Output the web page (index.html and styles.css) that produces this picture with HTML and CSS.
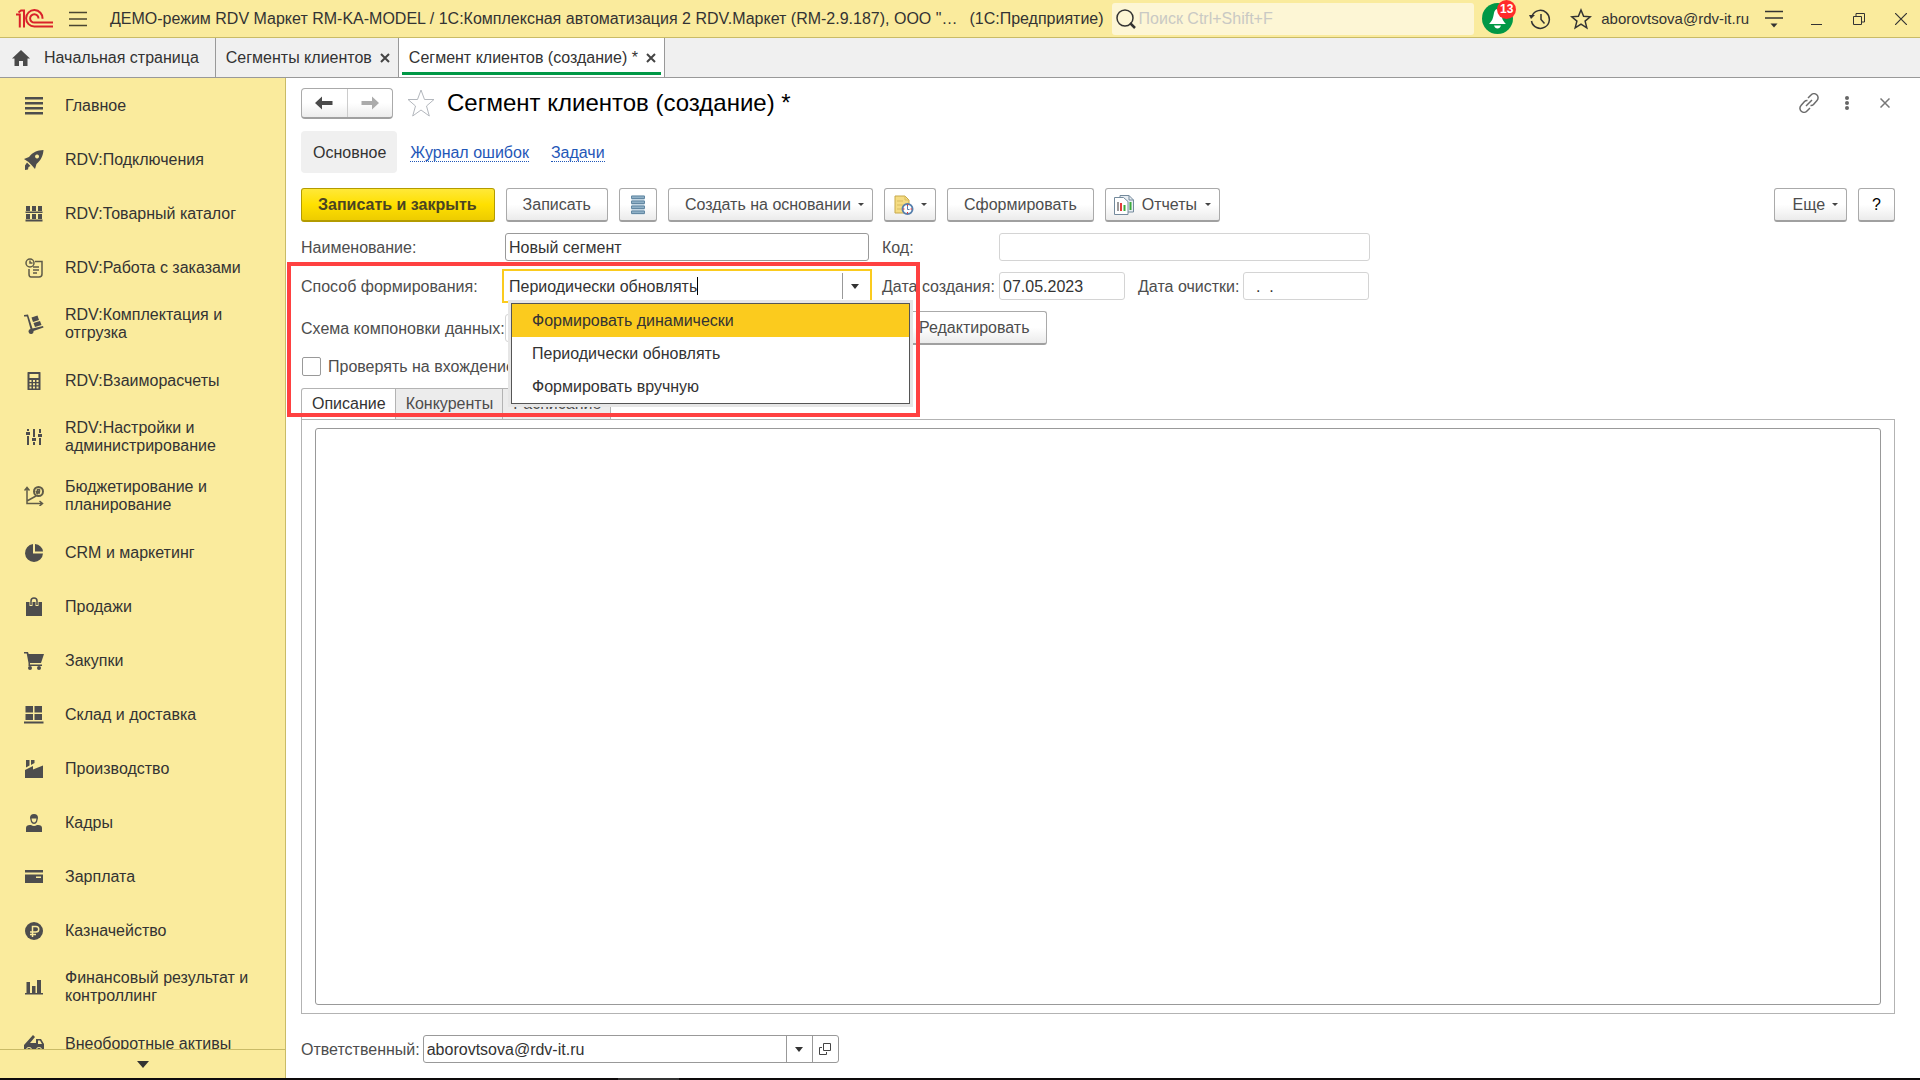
FILE: index.html
```
<!DOCTYPE html>
<html lang="ru">
<head>
    <meta charset="UTF-8">
    <meta name="viewport" content="width=device-width, initial-scale=1.0">
    <title>Сегмент клиентов (создание)</title>
    <link rel="stylesheet" href="styles.css">
</head>
<body>

    <!-- Title bar -->
    <header class="topbar">
        <svg class="logo" width="38" height="20" viewBox="0 0 38 20" fill="none" stroke="#d9222a" stroke-width="2">
            <path d="M0 5.500h3.800V18.500M2.500 3.500L5 1.500h3V18.500"/>
            <path d="M26.500 9.800A8.200 8.200 0 1 0 18.500 17.500H37"/>
            <path d="M22.500 9.500A4.200 4.200 0 1 0 18.500 13.600H37"/>
        </svg>
        <button class="icon-btn menu-btn" aria-label="Меню">
            <svg width="18" height="16" viewBox="0 0 18 16" stroke="#4a4631" stroke-width="1.500"><path d="M0 1.500h18M0 8h18M0 14.500h18"/></svg>
        </button>
        <div class="app-title">ДЕМО-режим RDV Маркет RM-KA-MODEL / 1С:Комплексная автоматизация 2 RDV.Маркет (RM-2.9.187), ООО "…</div>
        <div class="app-name">(1С:Предприятие)</div>
        <label class="search">
            <svg width="20" height="20" viewBox="0 0 20 20" fill="none" stroke="#333"><circle cx="9" cy="9" r="8" stroke-width="1.500"/><path d="M14 14l5 5" stroke-width="2.500"/></svg>
            <input type="text" placeholder="Поиск Ctrl+Shift+F" aria-label="Поиск">
        </label>
        <button class="icon-btn bell" aria-label="Оповещения">
            <svg width="31" height="31" viewBox="0 0 31 31"><circle cx="15.500" cy="15.500" r="15.500" fill="#009846"/><path d="M15.500 6c2 0 3 2 3.500 4 1 6 2 8 5 11H7c3-3 4-5 5-11 .5-2 1.500-4 3.500-4zM12 22.500h7q-1 3-3.500 3t-3.500-3z" fill="#fff"/></svg>
            <span class="badge">13</span>
        </button>
        <div class="top-actions">
            <button class="icon-btn" aria-label="История">
                <svg width="22" height="22" viewBox="0 0 22 22" fill="none" stroke="#333" stroke-width="1.500"><path d="M3 8a9 9 0 1 1-.5 5M12 6v5.500l3.500 4"/><path d="M0 7h6l-4 4z" fill="#333" stroke="none"/></svg>
            </button>
            <button class="icon-btn" aria-label="Избранное">
                <svg width="22" height="22" viewBox="0 0 22 22" fill="none" stroke="#333" stroke-width="1.500"><path d="M11 2l2.600 6.300 6.700.5-5.200 4.300 1.700 6.700-5.800-3.700-5.800 3.700 1.700-6.700L1.700 8.800l6.700-.5z"/></svg>
            </button>
        </div>
        <a class="user" href="#">aborovtsova@rdv-it.ru</a>
        <button class="icon-btn service" aria-label="Сервис">
            <svg width="18" height="18" viewBox="0 0 18 18" stroke="#333" stroke-width="1.500"><path d="M0 1.500h18M0 8h18"/><path d="M5.500 13.500h7l-3.500 4z" fill="#333" stroke="none"/></svg>
        </button>
        <div class="window-btns">
            <button class="icon-btn" aria-label="Свернуть">
                <svg width="12" height="12" viewBox="0 0 12 12" stroke="#333"><path d="M0 11.500h11"/></svg>
            </button>
            <button class="icon-btn" aria-label="Развернуть">
                <svg width="12" height="12" viewBox="0 0 12 12" fill="none" stroke="#333"><path d="M.5 3.500h8v8h-8zM3 3V.5h8.500V9H9"/></svg>
            </button>
            <button class="icon-btn" aria-label="Закрыть">
                <svg width="12" height="12" viewBox="0 0 12 12" stroke="#333" stroke-width="1.200"><path d="M0 0l12 12M12 0L0 12"/></svg>
            </button>
        </div>
    </header>

    <!-- Open windows -->
    <nav class="window-tabs">
        <a class="window-tab home" href="#">
            <svg width="18" height="16" viewBox="0 0 18 16" fill="#4a4a4a"><path d="M9 0l9 8.500h-2.500V16h-4.500v-5H7v5H2.500V8.500H0z"/></svg>
            Начальная страница
        </a>
        <div class="window-tab">
            <a href="#">Сегменты клиентов</a>
            <button class="icon-btn" aria-label="Закрыть вкладку">
                <svg width="10" height="10" viewBox="0 0 10 10" stroke="#444" stroke-width="2"><path d="M1 1l8 8M9 1L1 9"/></svg>
            </button>
        </div>
        <div class="window-tab active">
            <a href="#">Сегмент клиентов (создание) *</a>
            <button class="icon-btn" aria-label="Закрыть вкладку">
                <svg width="10" height="10" viewBox="0 0 10 10" stroke="#444" stroke-width="2"><path d="M1 1l8 8M9 1L1 9"/></svg>
            </button>
        </div>
    </nav>

    <div class="workspace">

        <!-- Sections -->
        <aside class="sidebar">
            <nav class="sections">
                <a href="#"><svg viewBox="0 0 20 20"><path d="M1 1h18v2.500H1zM1 6h18v2.500H1zM1 11h18v2.500H1zM1 16h18v2.500H1z"/></svg><span>Главное</span></a>
                <a href="#"><svg viewBox="0 0 20 20"><path fill-rule="evenodd" d="M19.500 0c-.5 6-2.500 10-7 14l-1.500 5-3.500-4-3-3L0 9l5-2C9 2 13 .5 19.500 0zM13 4.500a2 2 0 1 0 .1 0zM3 12.500l3.500 3.500-2 1-.5 2.500-3 .5v-4.500z"/></svg><span>RDV:Подключения</span></a>
                <a href="#"><svg viewBox="0 0 20 20"><path d="M2 2h4v5H2zM8 2h4v5H8zM14 2h4v5h-4zM2 10h4v5H2zM8 10h4v5H8zM14 10h4v5h-4zM1.500 7.500h17V9h-17zM1.500 15.500h17v2h-17z"/></svg><span>RDV:Товарный каталог</span></a>
                <a href="#"><svg viewBox="0 0 20 20" class="line"><circle cx="6" cy="5" r="4"/><path d="M6 2.500V5h2.500M11 3.500h7V16q0 3-3 3H7q-2 0-2-3v-5M9 9h6M9 12h6M9 15h4"/></svg><span>RDV:Работа с заказами</span></a>
                <a href="#"><svg viewBox="0 0 20 20"><path d="M0 1l4-.5 4.500 14L19 12l.5 1.500-10 3.500a2.500 2.500 0 1 1-3-2L3 2.500H0zM7.500 3.500l6-2 1.500 4.500-6 2zM9.500 9l6.500-2 1.500 4-6.500 2z"/></svg><span>RDV:Комплектация и отгрузка</span></a>
                <a href="#"><svg viewBox="0 0 20 20"><path fill-rule="evenodd" d="M4 1h12q.5 0 .5.500v17q0 .5-.5.500H4q-.5 0-.5-.5v-17Q3.500 1 4 1zM5.500 3v4h9V3zM5.500 9v2h2V9zM9 9v2h2V9zM12.500 9v2h2V9zM5.500 12.200v2h2v-2zM9 12.200v2h2v-2zM12.500 12.200v2h2v-2zM5.500 15.500v2h2v-2zM9 15.500v2h2v-2zM12.500 15.500v2h2v-2z"/></svg><span>RDV:Взаиморасчеты</span></a>
                <a href="#"><svg viewBox="0 0 20 20"><path d="M3 2h2v2H3zM2 5h4v3H2zM3 9h2v9H3zM9 2h2v8H9zM8 11h4v3H8zM9 15h2v3H9zM15 2h2v4h-2zM14 7h4v3h-4zM15 11h2v7h-2z"/></svg><span>RDV:Настройки и администрирование</span></a>
                <a href="#"><svg viewBox="0 0 20 20" class="line"><path d="M3 2v15.500h15M.5 4.500L3 1.500l2.500 3M15.500 15l3 2.500-3 2.500M3 15l9-5"/><circle cx="14.500" cy="5.500" r="4.500" stroke-width="2"/><path d="M13.500 8.500V3.500h2v2h-4M12 7h4"/></svg><span>Бюджетирование и планирование</span></a>
                <a href="#"><svg viewBox="0 0 20 20"><path d="M9 1v9.500h10A9 9 0 1 1 9 1z"/><path d="M11 1q7 1 8 7.500h-8z"/></svg><span>CRM и маркетинг</span></a>
                <a href="#"><svg viewBox="0 0 20 20"><path d="M2 5h16v14H2z"/><path d="M7 9V4a3 3 0 0 1 6 0v5" fill="none" stroke="#faeb9d" stroke-width="3"/><path d="M7 8V4a3 3 0 0 1 6 0v4" fill="none" stroke="#4d4d4d" stroke-width="1.500"/></svg><span>Продажи</span></a>
                <a href="#"><svg viewBox="0 0 20 20"><path d="M0 1h4l.7 2H20l-3 9H6v1.500h12V15H4.500v-3L2.700 2.500H0z"/><circle cx="6" cy="17" r="2"/><circle cx="15" cy="17" r="2"/></svg><span>Закупки</span></a>
                <a href="#"><svg viewBox="0 0 20 20"><path d="M1.500 1H9v6.500H1.500zM10.500 1H18v6.500h-7.500zM1.500 9H9v6H1.500zM10.500 9H18v6h-7.500zM0 16.500h19.500v2H0z"/></svg><span>Склад и доставка</span></a>
                <a href="#"><svg viewBox="0 0 20 20"><path d="M1 11l8-4v3.500l10-4V19H1zM2 1h3.500v5.500L2 8.500zM7 1h3.500v3L7 6z"/></svg><span>Производство</span></a>
                <a href="#"><svg viewBox="0 0 20 20"><path d="M6 5q0-4 4-4t4 4l-1 4q-1 2-3 2T7 9zM2 19v-4q0-3 4-3h1q3 2 6 0h1q4 0 4 3v4z"/><path d="M7.500 5.500h5L12 8q-2 3-4 0z" fill="#faeb9d"/></svg><span>Кадры</span></a>
                <a href="#"><svg viewBox="0 0 20 20"><path fill-rule="evenodd" d="M1 3h18v2.500H1zM1 7.500h18V16H1zM12 9.500V11h5V9.500z"/></svg><span>Зарплата</span></a>
                <a href="#"><svg viewBox="0 0 20 20"><circle cx="10" cy="10" r="9"/><path d="M8.500 16V5.500h3.500a2.500 2.500 0 0 1 0 5.500H6M6 13.500h6" fill="none" stroke="#faeb9d" stroke-width="1.500"/></svg><span>Казначейство</span></a>
                <a href="#"><svg viewBox="0 0 20 20"><path d="M2.500 5H6v11H2.500zM8 9h3.500v7H8zM13 3h4v13h-4zM1 16h18v1.500H1z"/></svg><span>Финансовый результат и контроллинг</span></a>
                <a href="#"><svg viewBox="0 0 20 20"><path fill-rule="evenodd" d="M0 11L9 1l2 2-5 6h6V5h5l3 5v6h-2a3 3 0 0 0-6 0H8a3 3 0 0 0-6 0H0zM14 6.500V10h4l-2-3.500z"/><circle cx="5" cy="16" r="2"/><circle cx="15" cy="16" r="2"/></svg><span>Внеоборотные активы</span></a>
            </nav>
            <button class="scroll-down" aria-label="Прокрутить вниз">
                <svg width="12" height="7" viewBox="0 0 12 7"><path d="M0 0h12L6 7z" fill="#333"/></svg>
            </button>
        </aside>

        <main class="form">
            <div class="form-header">
                <div class="history-btns">
                    <button aria-label="Назад"><svg width="18" height="14" viewBox="0 0 18 14" fill="#4a4a4a"><path d="M0 7l7-6.500V5h10.500v4H7v4.500z"/></svg></button>
                    <button aria-label="Вперед"><svg width="18" height="14" viewBox="0 0 18 14" fill="#ababab"><path d="M18 7l-7-6.500V5H.500v4H11v4.500z"/></svg></button>
                </div>
                <button class="icon-btn" aria-label="Добавить в избранное">
                    <svg width="30" height="30" viewBox="0 0 30 30" fill="none" stroke="#b3b7bd"><path d="M15 2l3.500 9.500H28l-7.500 6.500 2.800 10L15 22l-8.300 6 2.800-10L2 11.500h9.500z"/></svg>
                </button>
                <h1>Сегмент клиентов (создание) *</h1>
                <div class="form-tools">
                    <button class="icon-btn" aria-label="Получить ссылку">
                        <svg width="20" height="20" viewBox="0 0 20 20" fill="none" stroke="#6b6b6b" stroke-width="1.500"><path d="M9 5l3-3a3.800 3.800 0 0 1 6 5.500l-3.500 4a3.500 3.500 0 0 1-3 1M11 15l-3 3a3.800 3.800 0 0 1-6-5.500l3.500-4a3.500 3.500 0 0 1 3-1M7 13l6-6"/></svg>
                    </button>
                    <button class="icon-btn" aria-label="Дополнительно">
                        <svg width="4" height="14" viewBox="0 0 4 14" fill="#666"><circle cx="2" cy="2" r="2"/><circle cx="2" cy="7" r="2"/><circle cx="2" cy="12" r="2"/></svg>
                    </button>
                    <button class="icon-btn" aria-label="Закрыть форму">
                        <svg width="10" height="10" viewBox="0 0 10 10" stroke="#777" stroke-width="1.500"><path d="M.5.500l9 9M9.500.500l-9 9"/></svg>
                    </button>
                </div>
            </div>

            <nav class="form-nav">
                <span class="current">Основное</span>
                <a href="#">Журнал ошибок</a>
                <a href="#">Задачи</a>
            </nav>

            <div class="toolbar">
                <button class="btn primary">Записать и закрыть</button>
                <button class="btn">Записать</button>
                <button class="btn icon-only" aria-label="Список">
                    <svg width="14" height="20" viewBox="0 0 14 20"><path d="M.5.500h13v19H.500z" fill="#c3d6e3"/><path d="M.5 1h13v2.500H.500zM.5 6h13v2.500H.500zM.5 11h13v2.500H.500zM.5 16h13v2.500H.500z" fill="#8fb0c6" stroke="#6388a3"/></svg>
                </button>
                <button class="btn dropdown">Создать на основании</button>
                <button class="btn dropdown compact" aria-label="Напоминание">
                    <svg width="20" height="20" viewBox="0 0 20 20"><path d="M1 1h10l4 4v13H1z" fill="#f5dc83" stroke="#c7a94b"/><path d="M11 1v4h4M3 6h6M3 10h6M3 14h4" fill="none" stroke="#d9bd60"/><circle cx="13.500" cy="14" r="5" fill="#fff" stroke="#567fac" stroke-width="2"/><path d="M13.500 11v3.500h2" fill="none" stroke="#567fac"/><path d="M13.500 9.500v1.500M13.500 17v1.500M9 14h1.500M16.500 14H18" stroke="#e33"/></svg>
                </button>
                <button class="btn">Сформировать</button>
                <button class="btn dropdown reports">
                    <svg width="20" height="20" viewBox="0 0 20 20" stroke="#748a9c"><path d="M6 .5h9l4.500 4.500v12H6z" fill="#e8eef3"/><path d="M15 .5V5h4.500" fill="none"/><path d="M16.500 7v8" stroke="#3bab3b" stroke-width="2"/><path d="M.5 2.500h9l4.500 4v13H.500z" fill="#fff"/><path d="M4 7v9" stroke="#777" stroke-width="1.500"/><path d="M7 8v8" stroke="#e43b3b" stroke-width="2"/><path d="M10.500 10v6" stroke="#3bab3b" stroke-width="2"/></svg>
                    Отчеты
                </button>
                <button class="btn dropdown more">Еще</button>
                <button class="btn help" aria-label="Справка">?</button>
            </div>

            <div class="fields">
                <div class="field-row">
                    <label class="main-label" for="name">Наименование:</label>
                    <input class="main-input" type="text" id="name" value="Новый сегмент">
                    <label class="side-label" for="code">Код:</label>
                    <input class="code muted" type="text" id="code">
                </div>
                <div class="field-row">
                    <label class="main-label" for="method">Способ формирования:</label>
                    <div class="combo">
                        <input type="text" id="method" role="combobox" aria-expanded="true" aria-controls="methodList" value="Периодически обновлять">
                        <span class="caret"></span>
                        <button class="pick" aria-label="Выбрать"><svg width="8" height="5" viewBox="0 0 8 5"><path d="M0 0h8L4 5z" fill="#333"/></svg></button>
                        <ul class="options" id="methodList" role="listbox">
                            <li class="selected" role="option" aria-selected="true">Формировать динамически</li>
                            <li role="option">Периодически обновлять</li>
                            <li role="option">Формировать вручную</li>
                        </ul>
                    </div>
                    <label class="side-label" for="created">Дата создания:</label>
                    <input class="date muted" type="text" id="created" value="07.05.2023">
                    <label class="clear-label" for="cleared">Дата очистки:</label>
                    <input class="date muted" type="text" id="cleared" value="  .  .">
                </div>
                <div class="field-row">
                    <label class="main-label" for="schema">Схема компоновки данных:</label>
                    <input class="schema muted" type="text" id="schema">
                    <button class="btn">Редактировать</button>
                </div>
            </div>

            <label class="check">
                <input type="checkbox">
                Проверять на вхождение
            </label>

            <div class="page-tabs">
                <button class="active">Описание</button>
                <button>Конкуренты</button>
                <button>Расписание</button>
            </div>
            <div class="page">
                <textarea aria-label="Описание"></textarea>
            </div>

            <div class="footer-row">
                <label for="owner">Ответственный:</label>
                <div class="owner">
                    <input type="text" id="owner" value="aborovtsova@rdv-it.ru">
                    <button aria-label="Выбрать"><svg width="8" height="5" viewBox="0 0 8 5"><path d="M0 0h8L4 5z" fill="#333"/></svg></button>
                    <button aria-label="Открыть"><svg width="12" height="12" viewBox="0 0 12 12" fill="none" stroke="#444"><path d="M4.500.500h7v7h-7zM3 4.500H.500v7h7V9"/></svg></button>
                </div>
            </div>

            <div class="highlight"></div>
        </main>
    </div>

    <div class="taskbar"></div>

</body>
</html>
```
FILE: styles.css
```
* {
    box-sizing: border-box;
}

body {
    margin: 0;
    height: 100vh;
    display: flex;
    flex-direction: column;
    overflow: hidden;
    background: #fff;
    color: #333;
    font-family: "Liberation Sans", Arial, sans-serif;
    font-size: 16px;
    line-height: 18px;
}

button, input, textarea {
    font: inherit;
    color: inherit;
    margin: 0;
}

a {
    color: inherit;
    text-decoration: none;
}

svg {
    display: block;
    flex: none;
}

.icon-btn {
    display: flex;
    align-items: center;
    justify-content: center;
    padding: 0;
    border: 0;
    background: none;
}

/* Title bar */
.topbar {
    display: flex;
    align-items: center;
    flex: none;
    height: 38px;
    padding: 0 13px 0 16px;
    background: #faeb9d;
    border-bottom: 1px solid #c9bb67;
}

.menu-btn {
    margin: 0 23px 0 15px;
}

.app-title {
    white-space: nowrap;
}

.app-name {
    margin: 0 8px 0 12px;
    white-space: nowrap;
}

.search {
    display: flex;
    align-items: center;
    flex: 1;
    gap: 3px;
    height: 32px;
    padding-left: 4px;
    margin-right: 8px;
    border-radius: 3px;
    background: #fdf6d5;
}

.search input {
    flex: 1;
    min-width: 0;
    padding: 0;
    border: 0;
    outline: 0;
    background: none;
}

.search input::placeholder {
    color: #c9c9c4;
}

.bell {
    position: relative;
}

.badge {
    position: absolute;
    top: -3px;
    right: -3px;
    width: 19px;
    height: 19px;
    border-radius: 50%;
    background: #ff2a2a;
    color: #fff;
    font-size: 12px;
    font-weight: bold;
}

.top-actions {
    display: flex;
    gap: 19px;
    margin: 0 9px 0 16px;
}

.user {
    font-size: 15px;
}

.service {
    margin: 0 28px 0 16px;
}

.window-btns {
    display: flex;
    gap: 30px;
}

/* Open windows */
.window-tabs {
    display: flex;
    flex: none;
    height: 40px;
    background: #f0f0f0;
    border-bottom: 1px solid #999;
}

.window-tab {
    display: flex;
    align-items: center;
    gap: 8px;
    padding: 0 8px 0 10px;
    border-right: 1px solid #999;
}

.window-tab.home {
    gap: 14px;
    padding: 0 16px 0 12px;
}

.window-tab.active {
    background: linear-gradient(#009846, #009846) center bottom 2px / calc(100% - 6px) 3px no-repeat #fff;
}

.workspace {
    display: flex;
    flex: 1;
    min-height: 0;
}

/* Sections */
.sidebar {
    display: flex;
    flex-direction: column;
    width: 286px;
    background: #faeb9d;
    border-right: 1px solid #c9bb67;
}

.sections {
    flex: 1;
    min-height: 0;
    overflow: hidden;
}

.sections a {
    display: flex;
    align-items: center;
    gap: 21px;
    padding: 12px 30px 11px 24px;
    min-height: 54px;
}

.sections svg {
    width: 20px;
    height: 20px;
    fill: #4d4d4d;
}

.sections .line {
    fill: none;
    stroke: #5f5b48;
    stroke-width: 1.5;
}

.scroll-down {
    display: flex;
    align-items: center;
    justify-content: center;
    height: 29px;
    flex: none;
    border: 0;
    border-top: 1px solid #c9bb67;
    background: none;
}

/* Form */
.form {
    position: relative;
    display: flex;
    flex-direction: column;
    flex: 1;
    min-width: 0;
    padding: 10px 25px 15px 15px;
    color: #4d4d4d;
}

.form-header {
    display: flex;
    align-items: center;
    height: 30px;
    gap: 13px;
}

.history-btns {
    display: flex;
    height: 31px;
    border: 1px solid #aaa;
    border-bottom: 2px solid #a0a0a0;
    border-radius: 4px;
    background: linear-gradient(#fff 50%, #ececec);
}

.history-btns button {
    width: 45px;
    padding: 0 13px;
    border: 0;
    background: none;
}

.history-btns button + button {
    border-left: 1px solid #ccc;
}

h1 {
    margin: 0 0 0 -2px;
    color: #000;
    font-size: 24px;
    font-weight: normal;
    line-height: 28px;
}

.form-tools {
    display: flex;
    gap: 18px;
    margin-left: auto;
}

.form-tools .icon-btn {
    width: 20px;
}

.form-nav {
    display: flex;
    align-items: center;
    gap: 22px;
    margin-top: 13px;
}

.form-nav .current {
    padding: 13px 11px 11px 12px;
    margin-right: -9px;
    border-radius: 4px;
    background: #f0f0f0;
    color: #333;
}

.form-nav a {
    margin-top: 2px;
    line-height: 17px;
    color: #1f57b8;
    border-bottom: 1px dotted #1f57b8;
}

.toolbar {
    display: flex;
    gap: 11px;
    margin-top: 15px;
}

.btn {
    display: flex;
    align-items: center;
    justify-content: center;
    height: 34px;
    padding: 0 16px;
    border: 1px solid #aaa;
    border-bottom: 2px solid #a0a0a0;
    border-radius: 3px;
    background: linear-gradient(#fff 50%, #ebebeb);
    white-space: nowrap;
}

.btn.primary {
    padding: 0 17px 0 16px;
    border-color: #b39b00;
    background: linear-gradient(#ffe838, #ffe000 50%, #edcc00);
    color: #4a4422;
    font-weight: bold;
}

.btn.icon-only {
    padding: 0 11px;
}

.btn.dropdown {
    padding-right: 8px;
}

.btn.dropdown::after {
    content: "";
    margin-left: 7px;
    border: 3px solid transparent;
    border-top-color: #444;
    border-bottom: 0;
}

.btn.compact {
    padding-left: 9px;
}

.btn.reports {
    gap: 8px;
    padding-left: 8px;
}

.btn.reports::after {
    margin-left: 0;
}

.btn.more {
    margin-left: auto;
    padding-left: 18px;
}

.btn.help {
    padding: 0 13px;
    color: #000;
}

/* Fields */
.fields {
    display: flex;
    flex-direction: column;
    gap: 11px;
    margin-top: 11px;
}

.field-row {
    display: flex;
    align-items: center;
}

.field-row label,
.footer-row label {
    padding-top: 2px;
    white-space: nowrap;
}

.field-row input,
.owner {
    height: 28px;
    padding: 1px 3px 0;
    border: 1px solid #999;
    border-radius: 3px;
    background: #fff;
    color: #333;
}

.field-row .muted {
    border-color: #d4d4d4;
    white-space: pre;
}

.main-label {
    width: 204px;
}

.main-input,
.combo {
    width: 364px;
}

.side-label {
    width: 117px;
    margin-left: 13px;
}

.clear-label {
    width: 105px;
    margin-left: 13px;
}

.code {
    width: 371px;
}

.date {
    width: 126px;
}

.schema {
    width: 386px;
    margin-right: 11px;
}

.combo {
    position: relative;
    display: flex;
    align-items: center;
    height: 28px;
    padding-left: 4px;
    outline: 2px solid #fbcb1e;
    outline-offset: 1px;
}

.field-row .combo input {
    field-sizing: content;
    height: 26px;
    padding: 1px 0 0;
    border: 0;
    outline: 0;
}

.caret {
    width: 1px;
    height: 18px;
    background: #000;
}

.pick {
    width: 27px;
    height: 26px;
    margin-left: auto;
    padding: 0 8px;
    border: 0;
    border-left: 1px solid #999;
    background: none;
}

.options {
    position: absolute;
    z-index: 2;
    top: 31px;
    left: 6px;
    width: 399px;
    margin: 0;
    padding: 0;
    list-style: none;
    border: 1px solid #555;
    background: #fff;
    box-shadow: 0 0 0 3px #e6e6e6;
    color: #333;
}

.options li {
    padding: 8px 20px 7px;
}

.options .selected {
    background: #fbcb1e;
}

.check {
    display: flex;
    align-items: center;
    align-self: flex-start;
    gap: 7px;
    margin: 12px 0 12px 1px;
}

.check input {
    appearance: none;
    width: 19px;
    height: 19px;
    border: 1px solid #999;
    border-radius: 2px;
    background: #fff;
}

/* Pages */
.page-tabs {
    display: flex;
    margin-bottom: -1px;
}

.page-tabs button {
    height: 32px;
    padding: 0 9px 0 10px;
    border: 1px solid #b3b3b3;
    border-left-width: 0;
    background: #ececec;
}

.page-tabs .active {
    border-left-width: 1px;
    border-bottom-color: #fff;
    border-radius: 3px 0 0 0;
    background: #fff;
    color: #333;
}

.page {
    display: flex;
    flex: 1;
    min-height: 0;
    padding: 8px 13px;
    border: 1px solid #b3b3b3;
}

.page textarea {
    flex: 1;
    border: 1px solid #999;
    border-radius: 3px;
    resize: none;
}

.footer-row {
    display: flex;
    align-items: center;
    gap: 3px;
    margin-top: 21px;
}

.owner {
    display: flex;
    width: 416px;
    padding: 0 0 0 3px;
}

.owner input {
    flex: 1;
    min-width: 0;
    padding: 1px 0 0;
    border: 0;
    background: none;
}

.owner button {
    display: flex;
    align-items: center;
    justify-content: center;
    width: 26px;
    padding: 0;
    border: 0;
    border-left: 1px solid #999;
    background: none;
}

/* Marker frame over the form method field */
.highlight {
    position: absolute;
    z-index: 3;
    top: 184px;
    left: 1px;
    width: 633px;
    height: 155px;
    border: 4px solid #ff4141;
    pointer-events: none;
}

.taskbar {
    flex: none;
    height: 2px;
    background: linear-gradient(#333, #333) 618px 0 / 61px 2px no-repeat #0d0a0b;
}
```
